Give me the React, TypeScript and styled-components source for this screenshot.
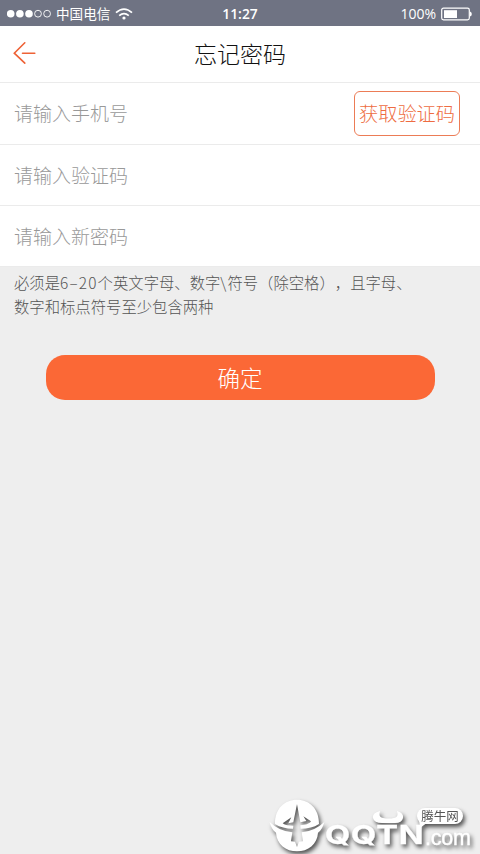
import React from "react";
import styled, { createGlobalStyle } from "styled-components";

const GlobalStyle = createGlobalStyle`
  * { box-sizing: border-box; }
  body { margin: 0; background: #eeeeee; }
  button, input { font: inherit; margin: 0; }
`;

const Screen = styled.main`
  position: relative;
  width: 480px;
  height: 854px;
  overflow: hidden;
  background: #eeeeee;
  font-family: "Noto Sans CJK SC", sans-serif;
  font-weight: 300;
`;

const StatusBar = styled.div`
  display: grid;
  grid-template-columns: 1fr auto 1fr;
  align-items: center;
  height: 26px;
  padding: 1px 8px 0 7px;
  background: #6f7383;
  color: #fff;
  font-family: "Open Sans", "Noto Sans CJK SC", sans-serif;
  font-size: 13.6px;
  font-weight: 400;
  line-height: 24px;
`;

const StatusGroup = styled.div<{ $end?: boolean }>`
  display: flex;
  align-items: center;
  justify-content: ${(p) => (p.$end ? "flex-end" : "flex-start")};
  gap: 5px;
`;

const Level = styled.span`
  font-size: 14px;
`;

const Clock = styled.span`
  font-weight: 600;
  font-size: 13.8px;
  padding-left: 1px;
`;

const Header = styled.header`
  display: grid;
  grid-template-columns: 60px 1fr 60px;
  align-items: center;
  height: 57px;
  padding-bottom: 2px;
  background: #fff;
  border-bottom: 1px solid #ebebeb;
`;

const BackButton = styled.button`
  display: flex;
  padding: 0 0 0 12px;
  border: 0;
  background: none;
`;

const Title = styled.h1`
  margin: 0;
  text-align: center;
  color: #111;
  font-size: 23px;
  line-height: 34px;
  font-weight: 300;
`;

const Field = styled.label`
  display: flex;
  align-items: center;
  height: 61px;
  padding: 0 20px 0 14px;
  background: #fff;
  border-bottom: 1px solid #ebebeb;
  &:first-of-type { height: 62px; padding-bottom: 1px; }
`;

const Input = styled.input`
  flex: 1;
  min-width: 0;
  height: 32px;
  padding: 0 0 2px;
  border: 0;
  outline: 0;
  background: none;
  font-size: 19px;
  &::placeholder { color: #999; opacity: 1; }
`;

const CodeButton = styled.button`
  width: 106px;
  height: 45px;
  padding: 0;
  border: 1px solid #ec7c56;
  border-radius: 6px;
  background: #fff;
  color: #ee6c42;
  font-size: 19.2px;
  line-height: 43px;
`;

const Hint = styled.p`
  margin: 4px 0 0 14px;
  color: #555;
  font-size: 15.35px;
  line-height: 23.5px;
  white-space: nowrap;
  text-spacing-trim: space-all;
  font-kerning: none;
`;

const Range = styled.span`
  letter-spacing: 1.2px;
`;

const Backslash = styled.span`
  padding-right: 1px;
`;

const Submit = styled.button`
  display: block;
  width: 389px;
  height: 45px;
  margin: 36.5px 0 0 45.5px;
  padding: 0;
  border: 0;
  border-radius: 19px;
  background: #fb6836;
  color: #fff;
  font-size: 22.5px;
  line-height: 44px;
`;

const Watermark = styled.div`
  position: absolute;
  left: 268px;
  top: 796px;
  width: 212px;
  height: 58px;
  color: #fff;
  filter: drop-shadow(2px 3px 2px rgba(0, 0, 0, 0.65));
`;

const Emblem = styled.svg`
  position: absolute;
  inset: 0;
`;

const Brand = styled.span`
  position: absolute;
  left: 57px;
  top: 22px;
  font: 700 25.5px/34px "Inter", sans-serif;
  letter-spacing: 0.6px;
  transform: scaleX(1.28);
  transform-origin: left;
  -webkit-text-stroke: 0.3px #fff;
`;

const Domain = styled.span`
  position: absolute;
  left: 157px;
  top: 27px;
  font: 400 21.5px/30px "Liberation Sans", sans-serif;
  letter-spacing: -0.2px;
  -webkit-text-stroke: 0.4px #fff;
`;

const Bubble = styled.span`
  position: absolute;
  left: 149px;
  top: 12px;
  width: 46px;
  height: 16px;
  border-radius: 8px;
  background: #fff;
  color: #555;
  text-align: center;
  font-size: 12.5px;
  line-height: 15px;
  font-weight: 400;
`;

const SignalIcon = () => (
  <svg width="44" height="10" viewBox="0 0 44 10">
    {[3.7, 12.9, 22].map((x) => <circle key={x} cx={x} cy="4.7" r="3.8" fill="#fff" />)}
    {[31, 40.1].map((x) => <circle key={x} cx={x} cy="4.7" r="3.4" fill="none" stroke="#fff" strokeWidth=".9" />)}
  </svg>
);

const WifiIcon = () => (
  <svg width="18" height="12" viewBox="0 0 18 12" fill="none" stroke="#fff" strokeWidth="1.7">
    <path d="M1 4.7Q9-2.6 17 4.7M4.2 7.7Q9 3.4 13.8 7.7" />
    <circle cx="9" cy="10" r="1.6" fill="#fff" stroke="none" />
  </svg>
);

const BatteryIcon = () => (
  <svg width="31" height="14" viewBox="0 0 31 14">
    <rect x=".7" y="1.2" width="27.6" height="11.6" rx="1.8" fill="none" stroke="#fff" strokeWidth="1.2" />
    <rect x="3" y="3.2" width="13" height="7.8" fill="#fff" />
    <path d="M29 4.5q1.8.5 1.8 2.5T29 9.5z" fill="#fff" />
  </svg>
);

const BackIcon = () => (
  <svg width="25" height="24" viewBox="0 0 25 24" fill="none" stroke="#ee6236" strokeWidth="1.6" strokeLinecap="round">
    <path d="M12.8 1.8 2.3 12.2 12.8 22.2M10.5 12.2H22.8" />
  </svg>
);

export default function App() {
  return (
    <>
      <GlobalStyle />
      <Screen>
        <StatusBar>
          <StatusGroup><SignalIcon /><span>中国电信</span><WifiIcon /></StatusGroup>
          <Clock>11:27</Clock>
          <StatusGroup $end><Level>100%</Level><BatteryIcon /></StatusGroup>
        </StatusBar>
        <Header>
          <BackButton aria-label="返回"><BackIcon /></BackButton>
          <Title>忘记密码</Title>
        </Header>
        <Field>
          <Input placeholder="请输入手机号" />
          <CodeButton>获取验证码</CodeButton>
        </Field>
        <Field><Input placeholder="请输入验证码" /></Field>
        <Field><Input placeholder="请输入新密码" /></Field>
        <Hint>必须是<Range>6–20</Range>个英文字母、数字<Backslash>\</Backslash>符号（除空格），且字母、<br />数字和标点符号至少包含两种</Hint>
        <Submit>确定</Submit>
        <Watermark>
          <Emblem width="212" height="58" viewBox="0 0 212 58" fill="#fff">
            <g transform="translate(-2 0) scale(.3333)">
              <path d="M27 84C26 38 56 11 93 11S160 38 159 84C144 94 125 98 104 98L103 88C118 87 130 84 135 76L112 61L121 75L103 79L93 24L82 79L67 82L76 64L50 82C57 88 70 89 82 89L81 98C60 98 42 94 27 84Z" />
              <path d="M11 78Q40 106 79 109L75 136L87 137L93 153L99 137L111 136L107 109Q146 106 175 78C171 93 166 103 156 110C154 145 126 166 93 166S32 145 30 110C20 103 15 93 11 78Z" />
            </g>
            <path d="M112 15q-2 6 3 7 6 1 11 0 5-1 3-7 7 2 6 7-1 5-8 5h-13q-8 0-9-5-1-5 7-7z" />
            <path d="M151 23h13l-12 9z" />
          </Emblem>
          <Brand>QQTN</Brand>
          <Domain>.com</Domain>
          <Bubble>腾牛网</Bubble>
        </Watermark>
      </Screen>
    </>
  );
}
